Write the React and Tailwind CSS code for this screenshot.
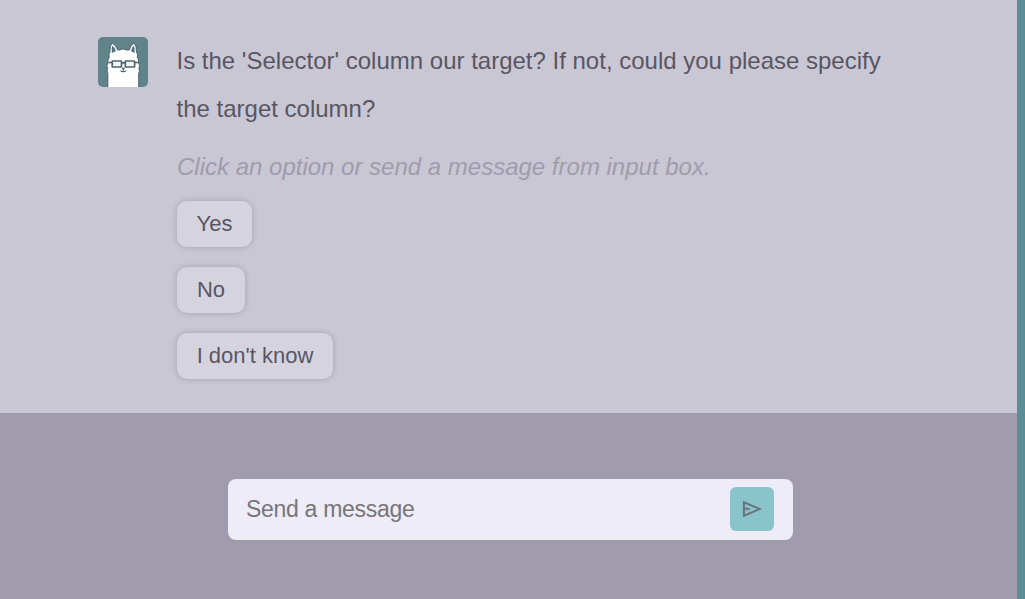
import React from "react";

const options = [
  { label: "Yes", width: "w-[75px]" },
  { label: "No", width: "w-[68px]" },
  { label: "I don't know", width: "w-[156px]" },
];

function Avatar() {
  return (
    <svg viewBox="0 0 50 50" className="h-[50px] w-[50px] shrink-0 rounded-[5px] bg-[#608489]">
      <path
        d="M9.800 51V36.500L9 34L9.600 31.500L8.800 28.500L10.200 26L9.800 23L11.200 20.500L10.900 17.500L11.900 15Q11.600 9 14 5.900Q18 8 19.700 13L22 12.900L25 11.800L28 12.900L31.200 13Q32.700 8 36 5.900Q38.900 9 38.500 15L39.600 17.500L39.300 20.500L40.800 23L40.300 26L41.700 28.500L40.900 31.500L41.500 34L40.700 36.500V51Z"
        fill="#fdfdfe"
        stroke="#49626e"
        strokeWidth="1"
        strokeLinejoin="round"
      />
      <path d="M14.400 8.500Q13 12.500 13.900 16L17.900 14.200Q17 10.500 14.400 8.500ZM35.900 8.500Q37.300 12.500 36.500 16L33 14.200Q33.700 10.500 35.900 8.500Z" fill="#58727d" />
      <g fill="#f4f6f8" stroke="#4d6570" strokeWidth="1.700">
        <rect x="14.200" y="24" width="9.300" height="6" rx=".5" />
        <rect x="27.300" y="24" width="9.300" height="6" rx=".5" />
        <path d="M23.500 25.800H27.300M11 25.500H14M36.700 25.500H39.800" />
        <path d="M25.300 31.500V34.300M22.500 33.300Q23 34.900 25.300 34.600Q27.600 34.900 28.100 33.300" fill="none" strokeWidth="1.100" />
      </g>
      <path d="M23.300 30.700H27.300L25.300 32.900Z" fill="#4d6570" />
    </svg>
  );
}

function SendIcon() {
  return (
    <svg viewBox="0 0 22 20" className="h-5 w-[22px]" fill="none" stroke="#6b7180" strokeWidth="1.900">
      <path d="M2.900 3.300V16.700L18.700 10Z" />
      <path d="M3 8.900L8.700 10L3 11.100" strokeWidth="1.300" />
    </svg>
  );
}

export default function App() {
  return (
    <div className="flex h-[599px] w-[1025px] overflow-hidden bg-[#5b8d97] font-['Liberation_Sans',Arial,sans-serif]">
      <div className="flex w-[1017px] flex-col">
        <main className="flex h-[413px] gap-[29px] bg-[#cac7d4] pt-[37px] pl-[98px]">
          <Avatar />
          <div className="flex w-[730px] flex-col items-start text-[24px] text-[#595663]">
            <p className="-ml-[0.5px] leading-[48px]">
              Is the 'Selector' column our target? If not, could you please specify
              <br />
              the target column?
            </p>
            <p className="mt-[10px] leading-[48px] text-[#9f9cac] italic">
              Click an option or send a message from input box.
            </p>
            <div className="mt-[10px] flex flex-col items-start gap-5">
              {options.map(({ label, width }) => (
                <button
                  key={label}
                  className={`${width} h-[46px] rounded-[10px] bg-[#d5d3de] text-center text-[22px] leading-[46px] whitespace-nowrap shadow-[0_0_6px_rgba(80,70,110,0.3)]`}
                >
                  {label}
                </button>
              ))}
            </div>
          </div>
        </main>
        <footer className="flex h-[186px] items-start bg-[#a09cad] pt-[66px] pl-[228px]">
          <form className="flex h-[61px] w-[565px] items-start rounded-lg bg-[#eeecf6] pt-2 pr-[19px] pl-[18px]">
            <input
              type="text"
              placeholder="Send a message"
              className="h-11 min-w-0 flex-1 bg-transparent text-[23px] tracking-[-0.3px] outline-none placeholder:text-[#777579]"
            />
            <button type="button" aria-label="Send" className="flex h-11 w-11 items-center justify-center rounded-[6px] bg-[#88c4c9]">
              <SendIcon />
            </button>
          </form>
        </footer>
      </div>
    </div>
  );
}
